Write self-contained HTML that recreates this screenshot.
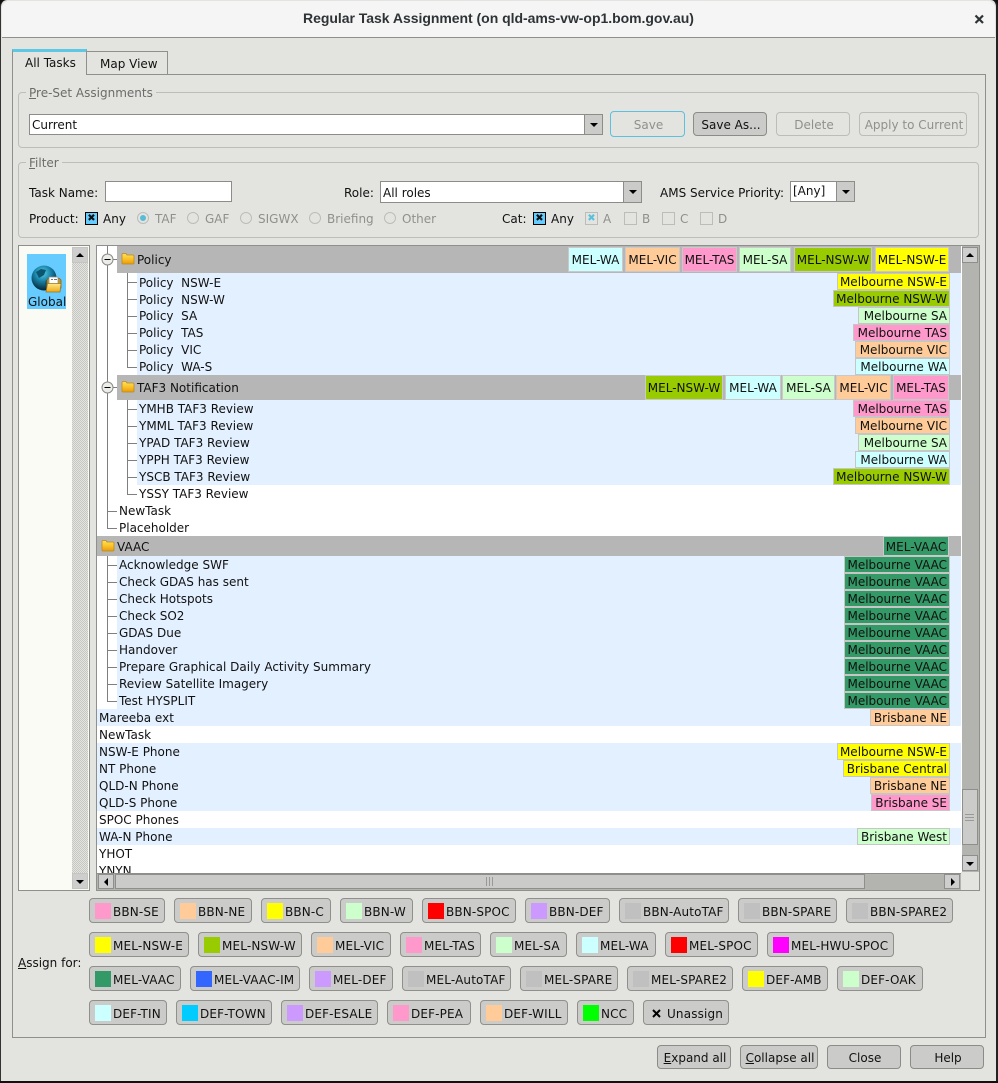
<!DOCTYPE html>
<html><head><meta charset="utf-8"><title>Regular Task Assignment</title>
<style>
html,body{margin:0;padding:0;background:#111}
#w{position:relative;width:998px;height:1083px;overflow:hidden;background:#111;font:12px "DejaVu Sans",sans-serif;color:#111}
#w div,#w span.a{position:absolute;box-sizing:border-box}
#win{left:1px;top:1px;width:995px;height:1080px;background:#e3e4df;border-radius:7px 7px 0 0;overflow:hidden}
.t{position:absolute;white-space:pre;line-height:17px;height:17px;margin-top:1px}
.g{color:#8f908d}
.lg{color:#6b6c6a}
u{text-decoration:underline}
.group{border:1px solid #bdbdb9;border-radius:4px}
.in{background:#fff;border:1px solid #8c8c88}
.dd{background:#cbcbc9;border:1px solid #8c8c88}
.dd:after{content:"";position:absolute;left:5px;top:8px;border:4px solid transparent;border-top:4px solid #000;border-bottom:0}
.btn{border:1px solid #8b8b87;border-radius:4px;background:#cbcbc9;text-align:center;line-height:24px;white-space:pre;padding-left:2px}
.btn.dis{background:#e3e4df;border-color:#bcbcb8;color:#8f908d}
.ab{border:1px solid #8f8f8b;border-radius:4px;background:#cbcbc9;height:25px;line-height:25px;white-space:pre}
.ab i{position:absolute;left:5px;top:4px;width:16px;height:16px;display:block}
.ab b{position:absolute;left:23px;top:1px;font-weight:normal;letter-spacing:.15px}
.chk{width:13px;height:13px;background:#66ccff;border:1px solid #000;text-align:center;font-size:10px;line-height:11px;font-weight:bold}
.chk.d{background:#e3e4df;border-color:#bcbcb8;color:#5bc0de}
.chk.e{background:#e3e4df;border-color:#bcbcb8}
.rad{width:12px;height:12px;border:1px solid #bcbcb8;border-radius:50%}
.rad.on:after{content:"";position:absolute;left:2px;top:2px;width:6px;height:6px;border-radius:50%;background:#58bcd8}
.blue{background:#e3f0ff}
.hd{background:#b6b6b6}
.b{box-sizing:border-box;height:17px;width:auto;border:1px solid #c6c6c6;text-align:right;padding-right:2px;line-height:17px;white-space:pre}
.h{border:1px solid #c9c9c9;text-align:center;line-height:25px;white-space:pre}
.ln{background:#7f7f7f}
.sb{background:#cecece;border:1px solid #8e8e8a}
.up:after,.dn:after{content:"";position:absolute;left:3px;top:5px;border:4px solid transparent;border-top:0;border-bottom:4px solid #000}
.dn:after{border-bottom:0;border-top:4px solid #000;top:6px}
.lf:after,.rt:after{content:"";position:absolute;left:5px;top:3px;border:4px solid transparent;border-left:0;border-right:4px solid #000}
.rt:after{border-right:0;border-left:4px solid #000;left:6px}
</style></head><body><div id="w">
<div id="win" style="left:0;top:0;width:998px;height:1081px;border-left:1px solid #333;border-right:2px solid #222;"></div>

<!-- titlebar -->
<div style="left:2px;top:1px;width:993px;height:37px;background:#f5f5f5;border-bottom:1px solid #8f8f8b;border-radius:7px 7px 0 0"></div>
<span class="a" style="left:303px;top:10px;line-height:18px;font:bold 14px 'Liberation Sans',sans-serif;color:#2e3436;white-space:pre;letter-spacing:-.03px">Regular Task Assignment (on qld-ams-vw-op1.bom.gov.au)</span>
<svg style="position:absolute;left:974px;top:14px" width="11" height="11"><path d="M1.500 1.500L9 9M9 1.500L1.500 9" stroke="#2e3436" stroke-width="2.2"/></svg>

<!-- tab panel -->
<div style="left:12px;top:74px;width:974px;height:964px;border:1px solid #8f8f8b"></div>
<div style="left:87px;top:51px;width:81px;height:24px;border:1px solid #8f8f8b;border-left:0;background:#e3e4df"></div>
<div style="left:12px;top:49px;width:75px;height:26px;border:1px solid #8f8f8b;border-top:3px solid #5cc8e4;border-bottom:0;background:#e3e4df"></div>
<span class="t" style="left:25px;top:54px">All Tasks</span>
<span class="t" style="left:100px;top:55px">Map View</span>

<!-- Pre-set -->
<div class="group" style="left:18px;top:92px;width:961px;height:56px"></div>
<span class="t lg" style="left:26px;top:84px;background:#e3e4df;padding:0 3px"><u>P</u>re-Set Assignments</span>
<div class="in" style="left:29px;top:114px;width:556px;height:21px"></div>
<span class="t" style="left:32px;top:116px">Current</span>
<div class="dd" style="left:584px;top:114px;width:19px;height:21px"></div>
<div class="btn dis" style="left:610px;top:111px;width:75px;height:26px;border-color:#5cc0de;line-height:26px">Save</div>
<div class="btn" style="left:693px;top:112px;width:74px;height:24px">Save As...</div>
<div class="btn dis" style="left:776px;top:112px;width:74px;height:24px">Delete</div>
<div class="btn dis" style="left:859px;top:112px;width:108px;height:24px">Apply to Current</div>

<!-- Filter -->
<div class="group" style="left:18px;top:162px;width:961px;height:76px"></div>
<span class="t lg" style="left:26px;top:154px;background:#e3e4df;padding:0 3px"><u>F</u>ilter</span>
<span class="t" style="left:29px;top:184px">Task Name:</span>
<div class="in" style="left:105px;top:181px;width:127px;height:21px"></div>
<span class="t" style="left:344px;top:184px">Role:</span>
<div class="in" style="left:380px;top:181px;width:244px;height:22px"></div>
<span class="t" style="left:383px;top:184px">All roles</span>
<div class="dd" style="left:623px;top:181px;width:19px;height:22px"></div>
<span class="t" style="left:660px;top:184px">AMS Service Priority:</span>
<div class="in" style="left:790px;top:181px;width:47px;height:21px"></div>
<span class="t" style="left:793px;top:182px">[Any]</span>
<div class="dd" style="left:836px;top:181px;width:19px;height:21px"></div>

<span class="t" style="left:29px;top:210px">Product:</span>
<div class="chk" style="left:85px;top:212px">✖</div>
<span class="t" style="left:103px;top:210px">Any</span>
<div class="rad on" style="left:137px;top:212px"></div><span class="t g" style="left:155px;top:210px">TAF</span>
<div class="rad" style="left:187px;top:212px"></div><span class="t g" style="left:205px;top:210px">GAF</span>
<div class="rad" style="left:240px;top:212px"></div><span class="t g" style="left:258px;top:210px">SIGWX</span>
<div class="rad" style="left:309px;top:212px"></div><span class="t g" style="left:327px;top:210px">Briefing</span>
<div class="rad" style="left:384px;top:212px"></div><span class="t g" style="left:402px;top:210px">Other</span>

<span class="t" style="left:502px;top:210px">Cat:</span>
<div class="chk" style="left:533px;top:212px">✖</div>
<span class="t" style="left:551px;top:210px">Any</span>
<div class="chk d" style="left:585px;top:212px">✖</div><span class="t g" style="left:603px;top:210px">A</span>
<div class="chk e" style="left:624px;top:212px"></div><span class="t g" style="left:642px;top:210px">B</span>
<div class="chk e" style="left:662px;top:212px"></div><span class="t g" style="left:680px;top:210px">C</span>
<div class="chk e" style="left:700px;top:212px"></div><span class="t g" style="left:718px;top:210px">D</span>

<!-- left panel -->
<div style="left:18px;top:245px;width:72px;height:646px;background:#fbfbf6;border:1px solid #8f8f8b"></div>
<div style="left:72px;top:247px;width:16px;height:642px;background:repeating-conic-gradient(#c6c6c2 0 25%,#e3e4df 0 50%) 0 0/2px 2px"></div>
<div class="sb up" style="left:72px;top:247px;width:16px;height:16px;border-color:#c4c4c0"></div>
<div class="sb dn" style="left:72px;top:873px;width:16px;height:16px;border-color:#c4c4c0"></div>
<div style="left:27px;top:254px;width:39px;height:55px;background:#66ccff"></div>
<svg style="position:absolute;left:31px;top:264px" width="32" height="32" viewBox="0 0 32 32">
<defs>
<radialGradient id="gl" cx=".45" cy=".3" r=".75"><stop offset="0" stop-color="#58cfe6"/><stop offset=".45" stop-color="#167fa4"/><stop offset=".85" stop-color="#0a3344"/><stop offset="1" stop-color="#061a24"/></radialGradient>
<linearGradient id="fg" x1="0" y1="0" x2="0" y2="1"><stop offset="0" stop-color="#ffe88a"/><stop offset="1" stop-color="#eda91a"/></linearGradient>
</defs>
<circle cx="13" cy="14" r="12.500" fill="url(#gl)"/>
<path d="M5 8l5-3 5 1-2 5-5 3zM15 16l4 1-2 6-3-3z" fill="#0b5570"/>
<path d="M16 24v-8l1.500-1.500h11L30 16v8z" fill="#c89526" stroke="#8a6414" stroke-width=".8"/>
<path d="M18 13h9v7h-9z" fill="#fff" stroke="#8a8a8a" stroke-width=".7"/>
<path d="M20 15h2v1h-2zM23 15h3v1h-3z" fill="#777"/>
<path d="M15 28l1.500-8.500h13.500l-1 8.500z" fill="url(#fg)" stroke="#9c7414" stroke-width=".8"/>
</svg>
<span class="t" style="left:28px;top:293px">Global</span>

<!-- tree container -->
<div style="left:96px;top:245px;width:884px;height:646px;background:#fff;border:1px solid #8f8f8b;overflow:hidden"></div>

<!-- backgrounds -->
<div class="hd" style="left:117px;top:246px;width:844px;height:27px"></div>
<div class="blue" style="left:137px;top:273px;width:824px;height:102px"></div>
<div class="hd" style="left:117px;top:375px;width:844px;height:25px"></div>
<div class="blue" style="left:137px;top:400px;width:824px;height:85px"></div>
<div class="hd" style="left:97px;top:536px;width:864px;height:20px"></div>
<div class="blue" style="left:117px;top:556px;width:844px;height:153px"></div>
<div class="blue" style="left:97px;top:709px;width:864px;height:17px"></div>
<div class="blue" style="left:97px;top:743px;width:864px;height:68px"></div>
<div class="blue" style="left:97px;top:828px;width:864px;height:17px"></div>

<!-- tree lines -->
<div class="ln" style="left:107px;top:246px;width:1px;height:282px"></div>
<div class="ln" style="left:127px;top:273px;width:1px;height:94px"></div>
<div class="ln" style="left:127px;top:400px;width:1px;height:94px"></div>
<div class="ln" style="left:107px;top:556px;width:1px;height:145px"></div>
<div class="ln" style="left:127px;top:282px;width:10px;height:1px"></div>
<div class="ln" style="left:127px;top:299px;width:10px;height:1px"></div>
<div class="ln" style="left:127px;top:316px;width:10px;height:1px"></div>
<div class="ln" style="left:127px;top:333px;width:10px;height:1px"></div>
<div class="ln" style="left:127px;top:350px;width:10px;height:1px"></div>
<div class="ln" style="left:127px;top:367px;width:10px;height:1px"></div>
<div class="ln" style="left:127px;top:409px;width:10px;height:1px"></div>
<div class="ln" style="left:127px;top:426px;width:10px;height:1px"></div>
<div class="ln" style="left:127px;top:443px;width:10px;height:1px"></div>
<div class="ln" style="left:127px;top:460px;width:10px;height:1px"></div>
<div class="ln" style="left:127px;top:477px;width:10px;height:1px"></div>
<div class="ln" style="left:127px;top:494px;width:10px;height:1px"></div>
<div class="ln" style="left:107px;top:511px;width:10px;height:1px"></div>
<div class="ln" style="left:107px;top:528px;width:10px;height:1px"></div>
<div class="ln" style="left:107px;top:565px;width:10px;height:1px"></div>
<div class="ln" style="left:107px;top:582px;width:10px;height:1px"></div>
<div class="ln" style="left:107px;top:599px;width:10px;height:1px"></div>
<div class="ln" style="left:107px;top:616px;width:10px;height:1px"></div>
<div class="ln" style="left:107px;top:633px;width:10px;height:1px"></div>
<div class="ln" style="left:107px;top:650px;width:10px;height:1px"></div>
<div class="ln" style="left:107px;top:667px;width:10px;height:1px"></div>
<div class="ln" style="left:107px;top:684px;width:10px;height:1px"></div>
<div class="ln" style="left:107px;top:701px;width:10px;height:1px"></div>
<div class="ln" style="left:107px;top:259px;width:10px;height:1px"></div>
<div class="ln" style="left:107px;top:387px;width:10px;height:1px"></div>

<!-- expanders -->
<svg style="position:absolute;left:101px;top:253px" width="13" height="13"><circle cx="6.500" cy="6.500" r="5.500" fill="#ecece8" stroke="#8a8a86"/><path d="M3.500 6.500h6" stroke="#000"/></svg>
<svg style="position:absolute;left:101px;top:381px" width="13" height="13"><circle cx="6.500" cy="6.500" r="5.500" fill="#ecece8" stroke="#8a8a86"/><path d="M3.500 6.500h6" stroke="#000"/></svg>

<!-- folders -->
<svg style="position:absolute;left:121px;top:252px" width="14" height="13"><defs><linearGradient id="fo" x1="0" y1="0" x2="0" y2="1"><stop offset="0" stop-color="#ffe060"/><stop offset=".5" stop-color="#fbc42a"/><stop offset="1" stop-color="#e89a10"/></linearGradient></defs><path d="M1 2.500Q1 1.500 2 1.500h3l1 1.500h6q1 0 1 1v7q0 1-1 1H2q-1 0-1-1z" fill="url(#fo)" stroke="#b98a1c" stroke-width=".8"/></svg>
<svg style="position:absolute;left:121px;top:380px" width="14" height="13"><path d="M1 2.500Q1 1.500 2 1.500h3l1 1.500h6q1 0 1 1v7q0 1-1 1H2q-1 0-1-1z" fill="url(#fo)" stroke="#b98a1c" stroke-width=".8"/></svg>
<svg style="position:absolute;left:101px;top:539px" width="14" height="13"><path d="M1 2.500Q1 1.500 2 1.500h3l1 1.500h6q1 0 1 1v7q0 1-1 1H2q-1 0-1-1z" fill="url(#fo)" stroke="#b98a1c" stroke-width=".8"/></svg>

<!-- row text -->
<span class="t" style="left:137px;top:251px">Policy</span>
<span class="t" style="left:139px;top:274px">Policy  NSW-E</span>
<span class="t" style="left:139px;top:291px">Policy  NSW-W</span>
<span class="t" style="left:139px;top:307px">Policy  SA</span>
<span class="t" style="left:139px;top:324px">Policy  TAS</span>
<span class="t" style="left:139px;top:341px">Policy  VIC</span>
<span class="t" style="left:139px;top:358px">Policy  WA-S</span>
<span class="t" style="left:137px;top:379px">TAF3 Notification</span>
<span class="t" style="left:139px;top:400px">YMHB TAF3 Review</span>
<span class="t" style="left:139px;top:417px">YMML TAF3 Review</span>
<span class="t" style="left:139px;top:434px">YPAD TAF3 Review</span>
<span class="t" style="left:139px;top:451px">YPPH TAF3 Review</span>
<span class="t" style="left:139px;top:468px">YSCB TAF3 Review</span>
<span class="t" style="left:139px;top:485px">YSSY TAF3 Review</span>
<span class="t" style="left:119px;top:502px">NewTask</span>
<span class="t" style="left:119px;top:519px">Placeholder</span>
<span class="t" style="left:117px;top:538px">VAAC</span>
<span class="t" style="left:119px;top:556px">Acknowledge SWF</span>
<span class="t" style="left:119px;top:573px">Check GDAS has sent</span>
<span class="t" style="left:119px;top:590px">Check Hotspots</span>
<span class="t" style="left:119px;top:607px">Check SO2</span>
<span class="t" style="left:119px;top:624px">GDAS Due</span>
<span class="t" style="left:119px;top:641px">Handover</span>
<span class="t" style="left:119px;top:658px">Prepare Graphical Daily Activity Summary</span>
<span class="t" style="left:119px;top:675px">Review Satellite Imagery</span>
<span class="t" style="left:119px;top:692px">Test HYSPLIT</span>
<span class="t" style="left:99px;top:709px">Mareeba ext</span>
<span class="t" style="left:99px;top:726px">NewTask</span>
<span class="t" style="left:99px;top:743px">NSW-E Phone</span>
<span class="t" style="left:99px;top:760px">NT Phone</span>
<span class="t" style="left:99px;top:777px">QLD-N Phone</span>
<span class="t" style="left:99px;top:794px">QLD-S Phone</span>
<span class="t" style="left:99px;top:811px">SPOC Phones</span>
<span class="t" style="left:99px;top:828px">WA-N Phone</span>
<span class="t" style="left:99px;top:845px">YHOT</span>
<div style="left:97px;top:862px;width:300px;height:11px;overflow:hidden"><span class="t" style="left:2px;top:0">YNYN</span></div>

<!-- header badges -->
<div class="h" style="left:568px;top:247px;width:55px;height:25px;background:#ccffff">MEL-WA</div>
<div class="h" style="left:625px;top:247px;width:55px;height:25px;background:#ffcc99">MEL-VIC</div>
<div class="h" style="left:682px;top:247px;width:55px;height:25px;background:#ff99cc">MEL-TAS</div>
<div class="h" style="left:739px;top:247px;width:52px;height:25px;background:#ccffcc">MEL-SA</div>
<div class="h" style="left:794px;top:247px;width:78px;height:25px;background:#99cc00">MEL-NSW-W</div>
<div class="h" style="left:875px;top:247px;width:74px;height:25px;background:#ffff00">MEL-NSW-E</div>

<div class="h" style="left:645px;top:375px;width:78px;height:25px;background:#99cc00">MEL-NSW-W</div>
<div class="h" style="left:725px;top:375px;width:56px;height:25px;background:#ccffff">MEL-WA</div>
<div class="h" style="left:782px;top:375px;width:53px;height:25px;background:#ccffcc">MEL-SA</div>
<div class="h" style="left:836px;top:375px;width:55px;height:25px;background:#ffcc99">MEL-VIC</div>
<div class="h" style="left:893px;top:375px;width:56px;height:25px;background:#ff99cc">MEL-TAS</div>

<div class="h" style="left:883px;top:536px;width:66px;height:20px;background:#339966;line-height:20px">MEL-VAAC</div>

<!-- row badges -->
<div class="b" style="left:837px;top:273px;width:113px;background:#ffff00">Melbourne NSW-E</div>
<div class="b" style="left:833px;top:290px;width:117px;background:#99cc00">Melbourne NSW-W</div>
<div class="b" style="left:858px;top:307px;width:92px;background:#ccffcc">Melbourne SA</div>
<div class="b" style="left:853px;top:324px;width:97px;background:#ff99cc">Melbourne TAS</div>
<div class="b" style="left:855px;top:341px;width:95px;background:#ffcc99">Melbourne VIC</div>
<div class="b" style="left:855px;top:358px;width:95px;background:#ccffff">Melbourne WA</div>
<div class="b" style="left:853px;top:400px;width:97px;background:#ff99cc">Melbourne TAS</div>
<div class="b" style="left:855px;top:417px;width:95px;background:#ffcc99">Melbourne VIC</div>
<div class="b" style="left:858px;top:434px;width:92px;background:#ccffcc">Melbourne SA</div>
<div class="b" style="left:855px;top:451px;width:95px;background:#ccffff">Melbourne WA</div>
<div class="b" style="left:833px;top:468px;width:117px;background:#99cc00">Melbourne NSW-W</div>
<div class="b" style="left:844px;top:556px;width:106px;background:#339966">Melbourne VAAC</div>
<div class="b" style="left:844px;top:573px;width:106px;background:#339966">Melbourne VAAC</div>
<div class="b" style="left:844px;top:590px;width:106px;background:#339966">Melbourne VAAC</div>
<div class="b" style="left:844px;top:607px;width:106px;background:#339966">Melbourne VAAC</div>
<div class="b" style="left:844px;top:624px;width:106px;background:#339966">Melbourne VAAC</div>
<div class="b" style="left:844px;top:641px;width:106px;background:#339966">Melbourne VAAC</div>
<div class="b" style="left:844px;top:658px;width:106px;background:#339966">Melbourne VAAC</div>
<div class="b" style="left:844px;top:675px;width:106px;background:#339966">Melbourne VAAC</div>
<div class="b" style="left:844px;top:692px;width:106px;background:#339966">Melbourne VAAC</div>
<div class="b" style="left:870px;top:709px;width:80px;background:#ffcc99">Brisbane NE</div>
<div class="b" style="left:837px;top:743px;width:113px;background:#ffff00">Melbourne NSW-E</div>
<div class="b" style="left:843px;top:760px;width:107px;background:#ffff00">Brisbane Central</div>
<div class="b" style="left:870px;top:777px;width:80px;background:#ffcc99">Brisbane NE</div>
<div class="b" style="left:871px;top:794px;width:79px;background:#ff99cc">Brisbane SE</div>
<div class="b" style="left:857px;top:828px;width:93px;background:#ccffcc">Brisbane West</div>

<!-- v scrollbar -->
<div style="left:962px;top:246px;width:17px;height:626px;background:#b3b4af"></div>
<div class="sb up" style="left:962px;top:247px;width:16px;height:16px"></div>
<div class="sb dn" style="left:962px;top:855px;width:16px;height:16px"></div>
<div style="left:962px;top:789px;width:16px;height:56px;background:#cbcbc9;border:1px solid #8e8e8a"></div>
<div style="left:965px;top:814px;width:9px;height:1px;background:#999"></div>
<div style="left:965px;top:817px;width:9px;height:1px;background:#999"></div>
<div style="left:965px;top:820px;width:9px;height:1px;background:#999"></div>

<!-- h scrollbar -->
<div style="left:97px;top:873px;width:864px;height:17px;background:#b3b4af;border-top:1px solid #8e8e8a"></div>
<div style="left:961px;top:872px;width:18px;height:18px;background:#e3e4df"></div>
<div class="sb lf" style="left:98px;top:874px;width:16px;height:15px"></div>
<div style="left:115px;top:874px;width:750px;height:15px;background:#cbcbc9;border:1px solid #8e8e8a"></div>
<div style="left:486px;top:877px;width:1px;height:9px;background:#999"></div>
<div style="left:489px;top:877px;width:1px;height:9px;background:#999"></div>
<div style="left:492px;top:877px;width:1px;height:9px;background:#999"></div>
<div class="sb rt" style="left:944px;top:874px;width:16px;height:15px"></div>

<!-- assign -->
<span class="t" style="left:18px;top:954px"><u>A</u>ssign for:</span>

<div class="ab" style="left:89px;top:898px;width:76px"><i style="background:#ff99cc"></i><b>BBN-SE</b></div>
<div class="ab" style="left:174px;top:898px;width:78px"><i style="background:#ffcc99"></i><b>BBN-NE</b></div>
<div class="ab" style="left:261px;top:898px;width:70px"><i style="background:#ffff00"></i><b>BBN-C</b></div>
<div class="ab" style="left:340px;top:898px;width:73px"><i style="background:#ccffcc"></i><b>BBN-W</b></div>
<div class="ab" style="left:422px;top:898px;width:94px"><i style="background:#ff0000"></i><b>BBN-SPOC</b></div>
<div class="ab" style="left:525px;top:898px;width:85px"><i style="background:#cc99ff"></i><b>BBN-DEF</b></div>
<div class="ab" style="left:619px;top:898px;width:110px"><i style="background:#c0c0c0"></i><b>BBN-AutoTAF</b></div>
<div class="ab" style="left:738px;top:898px;width:99px"><i style="background:#c0c0c0"></i><b>BBN-SPARE</b></div>
<div class="ab" style="left:846px;top:898px;width:107px"><i style="background:#c0c0c0"></i><b>BBN-SPARE2</b></div>

<div class="ab" style="left:89px;top:932px;width:100px"><i style="background:#ffff00"></i><b>MEL-NSW-E</b></div>
<div class="ab" style="left:198px;top:932px;width:104px"><i style="background:#99cc00"></i><b>MEL-NSW-W</b></div>
<div class="ab" style="left:311px;top:932px;width:80px"><i style="background:#ffcc99"></i><b>MEL-VIC</b></div>
<div class="ab" style="left:400px;top:932px;width:81px"><i style="background:#ff99cc"></i><b>MEL-TAS</b></div>
<div class="ab" style="left:490px;top:932px;width:77px"><i style="background:#ccffcc"></i><b>MEL-SA</b></div>
<div class="ab" style="left:576px;top:932px;width:80px"><i style="background:#ccffff"></i><b>MEL-WA</b></div>
<div class="ab" style="left:665px;top:932px;width:93px"><i style="background:#ff0000"></i><b>MEL-SPOC</b></div>
<div class="ab" style="left:767px;top:932px;width:127px"><i style="background:#ff00ff"></i><b>MEL-HWU-SPOC</b></div>

<div class="ab" style="left:89px;top:966px;width:92px"><i style="background:#339966"></i><b>MEL-VAAC</b></div>
<div class="ab" style="left:190px;top:966px;width:110px"><i style="background:#3366ff"></i><b>MEL-VAAC-IM</b></div>
<div class="ab" style="left:309px;top:966px;width:84px"><i style="background:#cc99ff"></i><b>MEL-DEF</b></div>
<div class="ab" style="left:402px;top:966px;width:109px"><i style="background:#c0c0c0"></i><b>MEL-AutoTAF</b></div>
<div class="ab" style="left:520px;top:966px;width:98px"><i style="background:#c0c0c0"></i><b>MEL-SPARE</b></div>
<div class="ab" style="left:627px;top:966px;width:106px"><i style="background:#c0c0c0"></i><b>MEL-SPARE2</b></div>
<div class="ab" style="left:742px;top:966px;width:86px"><i style="background:#ffff00"></i><b>DEF-AMB</b></div>
<div class="ab" style="left:837px;top:966px;width:86px"><i style="background:#ccffcc"></i><b>DEF-OAK</b></div>

<div class="ab" style="left:89px;top:1000px;width:78px"><i style="background:#ccffff"></i><b>DEF-TIN</b></div>
<div class="ab" style="left:176px;top:1000px;width:96px"><i style="background:#00ccff"></i><b>DEF-TOWN</b></div>
<div class="ab" style="left:281px;top:1000px;width:97px"><i style="background:#cc99ff"></i><b>DEF-ESALE</b></div>
<div class="ab" style="left:387px;top:1000px;width:84px"><i style="background:#ff99cc"></i><b>DEF-PEA</b></div>
<div class="ab" style="left:480px;top:1000px;width:88px"><i style="background:#ffcc99"></i><b>DEF-WILL</b></div>
<div class="ab" style="left:577px;top:1000px;width:57px"><i style="background:#00ff00"></i><b>NCC</b></div>
<div class="ab" style="left:643px;top:1000px;width:86px"><svg style="position:absolute;left:8px;top:8px" width="9" height="9"><path d="M1 1L8 8M8 1L1 8" stroke="#000" stroke-width="2"/></svg><b>Unassign</b></div>

<!-- bottom -->
<div class="btn" style="left:657px;top:1045px;width:74px;height:24px"><u>E</u>xpand all</div>
<div class="btn" style="left:740px;top:1045px;width:78px;height:24px"><u>C</u>ollapse all</div>
<div class="btn" style="left:827px;top:1045px;width:74px;height:24px">Close</div>
<div class="btn" style="left:910px;top:1045px;width:74px;height:24px">Help</div>
</div></body></html>
